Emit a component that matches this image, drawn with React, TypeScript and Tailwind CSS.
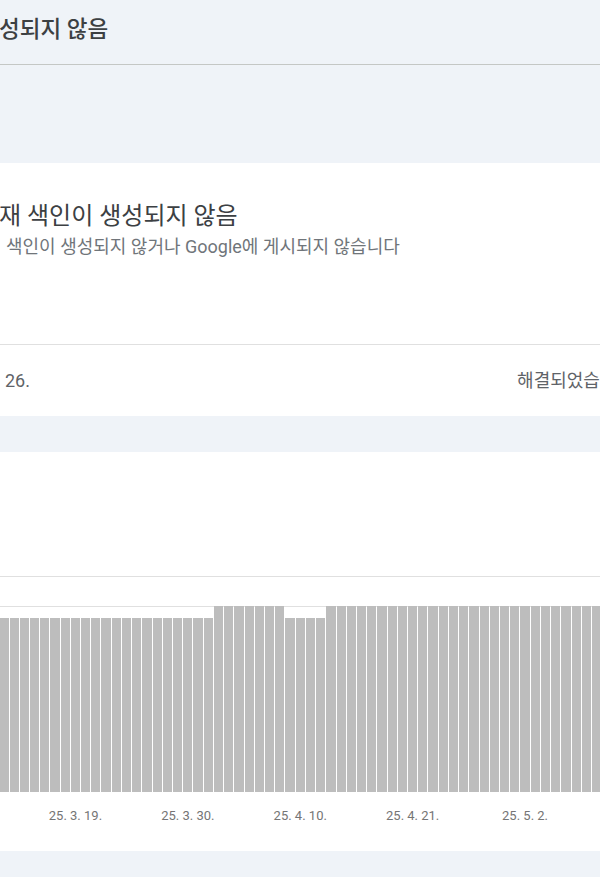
const bars: number[] = Array.from({ length: 59 }, (_, i) =>
  i < 21 ? 174 : i < 28 ? 186 : i < 32 ? 174 : 186
);

const labels: Record<number, string> = {
  7: "25. 3. 19.",
  18: "25. 3. 30.",
  29: "25. 4. 10.",
  40: "25. 4. 21.",
  51: "25. 5. 2.",
};

export default function App() {
  return (
    <div className="w-[600px] h-[877px] overflow-hidden bg-[#eff3f8] font-['Roboto','Noto_Sans_CJK_KR',sans-serif]">
      {/* page header */}
      <div className="h-[65px] flex items-center border-b border-[#c4c7c5]">
        <h1 className="-ml-[1px] -mt-[4px] text-[22.5px] font-medium text-[#3c4043] whitespace-nowrap">
          성되지 않음
        </h1>
      </div>

      {/* summary card */}
      <section className="mt-[98px] bg-white">
        <div className="h-[181px] pt-[38px]">
          <h2 className="-ml-[1px] text-[24px] leading-[30px] text-[#3c4043] whitespace-nowrap">
            재 색인이 생성되지 않음
          </h2>
          <p className="mt-[4px] pl-[6px] text-[18px] leading-[24px] text-[#70757a] whitespace-nowrap">
            색인이 생성되지 않거나 Google에 게시되지 않습니다
          </p>
        </div>
        <div className="h-[72px] border-t border-[#e0e0e0] flex items-center justify-between text-[18px] text-[#5f6368] whitespace-nowrap">
          <span className="pl-[5px]">26.</span>
          <span className="-mr-[33px]">해결되었습니다</span>
        </div>
      </section>

      {/* chart card */}
      <section className="mt-[36px] h-[399px] bg-white pt-[124px]">
        <div className="relative h-[216px]">
          <div className="absolute inset-x-0 top-0 border-t border-[#e0e0e0]" />
          <div className="absolute inset-x-0 top-[30px] border-t border-[#e0e0e0]" />
          <div className="relative h-full flex items-end gap-px -ml-[0.73px]">
            {bars.map((h, i) => (
              <div
                key={i}
                className="w-[9.23px] shrink-0 bg-[#bdbdbd]"
                style={{ height: h }}
              />
            ))}
          </div>
        </div>
        <div className="flex gap-px -ml-[0.73px] pt-[16px]">
          {bars.map((_, i) => (
            <div key={i} className="w-[9.23px] shrink-0 flex justify-center">
              {labels[i] && (
                <span className="text-[13px] leading-[16px] text-[#757575] whitespace-nowrap">
                  {labels[i]}
                </span>
              )}
            </div>
          ))}
        </div>
      </section>
    </div>
  );
}
